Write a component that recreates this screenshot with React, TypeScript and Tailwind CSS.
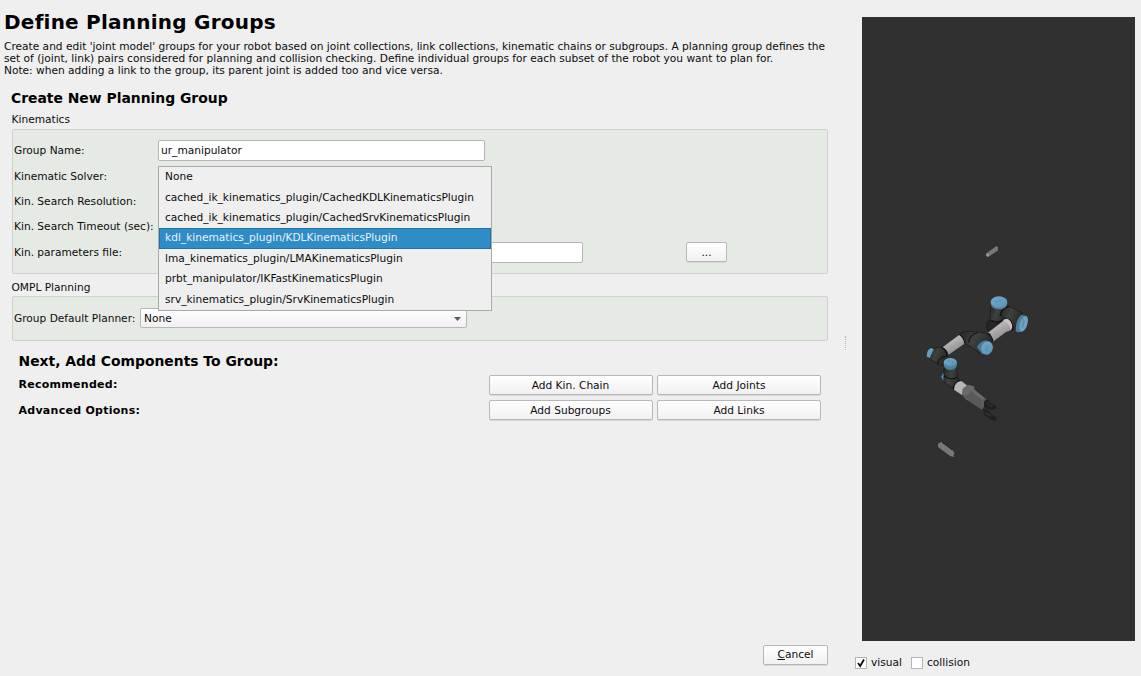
import type { ReactNode } from "react";

const solvers = [
  "None",
  "cached_ik_kinematics_plugin/CachedKDLKinematicsPlugin",
  "cached_ik_kinematics_plugin/CachedSrvKinematicsPlugin",
  "kdl_kinematics_plugin/KDLKinematicsPlugin",
  "lma_kinematics_plugin/LMAKinematicsPlugin",
  "prbt_manipulator/IKFastKinematicsPlugin",
  "srv_kinematics_plugin/SrvKinematicsPlugin",
];

function Button({ className, children }: { className: string; children: ReactNode }) {
  return (
    <button
      className={`flex h-[20px] items-center justify-center rounded-[2px] border border-[#b8b6b8] bg-linear-to-b from-white to-[#f2f0f2] pt-px shadow-[0_1px_0_#d8d8d8] ${className}`}
    >
      {children}
    </button>
  );
}

function SolverMenu() {
  return (
    <ul className="absolute top-[-10px] left-0 z-10 h-[145px] w-[334px] border border-[#a9a9a9] bg-[#efefef] pt-[0.5px] text-[#0c0c0c]">
      {solvers.map((s, i) => (
        <li
          key={s}
          className={`flex h-[20.4px] items-center pl-1.5 whitespace-nowrap ${
            i === 3 ? "bg-[#308cc6] text-[#e6f3fb] outline-1 -outline-offset-1 outline-[#2274a8]" : ""
          }`}
        >
          {s}
        </li>
      ))}
    </ul>
  );
}

function Row({ label, children }: { label: string; children?: ReactNode }) {
  return (
    <div className="flex h-[25.4px] items-center">
      <div className="w-[144px] shrink-0 pt-px whitespace-nowrap">{label}</div>
      {children}
    </div>
  );
}

function RobotView() {
  return (
    <svg viewBox="862 17 273 624" className="h-[624px] w-[273px] bg-[#303030]">
      <defs>
        <linearGradient id="tube" x1="0" y1="0" x2="0.6" y2="1">
          <stop offset="0" stopColor="#8f8d8d" />
          <stop offset="0.4" stopColor="#b9b6b6" />
          <stop offset="1" stopColor="#858383" />
        </linearGradient>
        <linearGradient id="joint" x1="0" y1="0" x2="1" y2="0.4">
          <stop offset="0" stopColor="#222422" />
          <stop offset="0.5" stopColor="#3e413e" />
          <stop offset="1" stopColor="#272927" />
        </linearGradient>
        <linearGradient id="cap" x1="0" y1="0" x2="1" y2="1">
          <stop offset="0" stopColor="#73a9cb" />
          <stop offset="1" stopColor="#5c92b4" />
        </linearGradient>
      </defs>
      <g transform="translate(910 280) scale(.33333)">
        <path d="M231 125 L240 120 L268 130 L264 152 L236 160 L230 143Z" fill="#252625" stroke="#141514" strokeWidth="2" />
        <path d="M242 70 L292 72 L288 98 L276 124 L256 128 L240 120Z" fill="url(#joint)" stroke="#181918" strokeWidth="2" />
        <path d="M270 106 Q274 78 300 80 L336 98 L324 150 L304 146 L292 118Z" fill="url(#joint)" stroke="#181918" strokeWidth="2" />
        <path d="M270 108 Q276 84 297 80 M244 121 Q262 132 276 120" fill="none" stroke="#090909" strokeWidth="3" />
        <ellipse cx="267" cy="71" rx="25" ry="17" fill="#4d7f9f" />
        <ellipse cx="267" cy="66" rx="25" ry="17" fill="url(#cap)" />
        <path d="M317 153 Q316 122 333 105 Q350 103 352 121 Q354 143 339 154 Q326 160 317 153Z" fill="#4c7e9e" />
        <ellipse cx="341" cy="131" rx="11" ry="24" transform="rotate(18 341 131)" fill="#6ea3c4" />
        <path d="M339 115 V142 M346 122 L336 137" stroke="#4f829f" strokeWidth="2" />
        <path d="M232 160 L282 121 Q294 112 303 125 Q312 138 302 151 L288 156 L249 185Z" fill="url(#tube)" />
        <path d="M279 121 Q292 111 303 125 Q312 139 301 151 Q303 134 279 121Z" fill="#c9c5c5" />
        <path d="M296 116 Q313 132 307 151" fill="none" stroke="#0b0b0b" strokeWidth="3" />
        <path d="M148 163 Q157 153 174 154 L205 156 L240 161 L248 183 L207 219 L184 200 L163 190Z" fill="url(#joint)" stroke="#161716" strokeWidth="2" />
        <path d="M176 188 Q177 164 203 158 M231 160 Q248 169 249 185 M148 163 Q162 171 165 190" fill="none" stroke="#090909" strokeWidth="3" />
        <path d="M201 202 Q209 184 227 181 L241 186 L248 200 Q247 217 234 224 L216 221Z" fill="#487997" />
        <ellipse cx="231" cy="204" rx="17" ry="20" transform="rotate(23 231 204)" fill="url(#cap)" />
        <path d="M229 193 V214 M237 196 L229 209" stroke="#4f83a1" strokeWidth="1.5" />
        <path d="M98 202 L147 165 Q160 173 163 191 L116 224 Q111 207 98 202Z" fill="url(#tube)" />
        <path d="M66 207 L88 202 Q105 203 112 227 L104 257 L89 255 L52 231Z" fill="url(#joint)" stroke="#161716" strokeWidth="2" />
        <path d="M94 202 Q110 210 112 230 M83 253 Q84 233 105 229" fill="none" stroke="#090909" strokeWidth="3" />
        <path d="M50 230 Q50 208 64 204 L71 208 L59 234Z" fill="#659dbf" />
        <path d="M99 280 L94 290 L100 304 L107 306 L104 283Z" fill="#5790b1" />
        <path d="M103 254 L140 258 L143 294 L151 304 L134 329 L101 306Z" fill="url(#joint)" stroke="#161716" strokeWidth="2" />
        <path d="M102 287 Q121 303 143 292 M130 327 Q132 306 151 302" fill="none" stroke="#080808" strokeWidth="3" />
        <ellipse cx="121" cy="254" rx="20" ry="16" fill="#4b7d9c" />
        <ellipse cx="121" cy="248" rx="20" ry="14" fill="url(#cap)" />
        <path d="M104 253 Q121 265 139 254" fill="none" stroke="#3f6e8a" strokeWidth="2" />
        <path d="M132 329 Q133 305 154 303 L172 317 L157 346Z" fill="#b8b6b6" />
        <path d="M156 344 L158 326 L174 314 L192 319 L195 328 L228 355 L229 366 L216 389 L176 363 L166 358Z" fill="#5e5e5e" />
        <path d="M174 314 L191 320 L193 330 L228 355 L217 360 L184 342 L171 350 L157 341 L160 326Z" fill="#6a6a6a" />
        <path d="M167 350 L184 334 L213 358 L214 387Z" fill="#595959" />
        <path d="M193 326 L228 355" stroke="#262626" strokeWidth="3" />
        <path d="M222 366 L227 359 L236 360 L240 369 L258 377 L259 386 L247 390 L232 387 L222 380Z" fill="#1e211e" />
        <path d="M219 388 L232 389 L241 400 L259 413 L257 423 L244 419 L222 404Z" fill="#1e211e" />
        <path d="M229 368 L241 378 L247 378 M226 399 L244 408" fill="none" stroke="#3c3f3c" strokeWidth="3" />
        <path d="M255 65 h6 m5 -3 h6 M115 243 h5 m5 5 h5" stroke="#497b99" strokeWidth="2" />
      </g>
      <path d="M986 253.5 L996.5 246 L998 247 L998 250.5 L988 257 L986 255Z" fill="#777" />
      <path d="M986 254 L989 254 L989 256 L987 257Z" fill="#999" />
      <path d="M938 444 L941 442 L955 452 L954 457 L950 456 L938 447Z" fill="#777" />
      <path d="M943 443 L955 452 L954 456" fill="none" stroke="#191919" strokeDasharray="1.5 1" />
    </svg>
  );
}

export default function App() {
  return (
    <div className="flex h-[676px] w-[1141px] overflow-hidden bg-[#efefef] font-['DejaVu_Sans',sans-serif] text-[10.62px] leading-[12.2px] text-[#0c0c0c]">
      <main className="flex w-[828px] shrink-0 flex-col">
        <h1 className="mt-[10px] ml-1 h-[24px] text-[20px] leading-[25px] font-bold tracking-[0.23px] text-black">Define Planning Groups</h1>
        <p className="mt-[6.5px] ml-1 whitespace-nowrap">
          Create and edit 'joint model' groups for your robot based on joint collections, link collections, kinematic chains or subgroups. A planning group defines the
          <br />
          set of (joint, link) pairs considered for planning and collision checking. Define individual groups for each subset of the robot you want to plan for.
          <br />
          Note: when adding a link to the group, its parent joint is added too and vice versa.
        </p>
        <h2 className="mt-[13px] ml-[11px] h-[16px] text-[13.9px] leading-[16px] font-bold text-black">Create New Planning Group</h2>
        <div className="mt-[7px] ml-[11.5px] h-[16px] leading-[14px]">Kinematics</div>

        <section className="ml-[12px] h-[145px] rounded-[2px] border border-[#cfd1cf] bg-[#e5eae4] pt-[8px] pl-px">
          <Row label="Group Name:">
            <input className="h-[21px] w-[327px] rounded-[2px] border border-[#b5b5b5] bg-white px-[2px]" defaultValue="ur_manipulator" />
          </Row>
          <Row label="Kinematic Solver:">
            <div className="relative h-[1px] w-[334px]">
              <SolverMenu />
            </div>
          </Row>
          <Row label="Kin. Search Resolution:" />
          <Row label="Kin. Search Timeout (sec):" />
          <Row label="Kin. parameters file:">
            <input className="h-[21px] w-[425px] rounded-[2px] border border-[#b5b5b5] bg-white" />
            <Button className="ml-[103px] w-[41px]">...</Button>
          </Row>
        </section>

        <div className="mt-[6px] ml-[11.5px] h-[16px] pt-px leading-[14px]">OMPL Planning</div>
        <section className="ml-[12px] flex h-[45px] items-center rounded-[2px] border border-[#cfd1cf] bg-[#e5eae4] pb-px pl-px">
          <div className="w-[126px] pt-px">Group Default Planner:</div>
          <button className="flex h-[20px] w-[327px] items-center justify-between rounded-[2px] border border-[#b8b6b8] bg-linear-to-b from-white to-[#f2f0f2] pt-px pr-[5px] pl-[3px]">
            None
            <svg viewBox="0 0 7 4" className="h-1 w-[7px]">
              <path d="M0 0H7L3.5 4Z" fill="#5b5b5b" />
            </svg>
          </button>
        </section>

        <h2 className="mt-[11px] ml-[18.5px] h-[18px] text-[13.9px] leading-[18px] font-bold text-black">Next, Add Components To Group:</h2>
        <div className="mt-[5px] mr-[7px] ml-[18.5px] flex flex-col gap-[5px]">
          <div className="flex h-[20px] items-center gap-[4.5px]">
            <h3 className="grow text-[11px] font-bold tracking-[0.27px] text-black">Recommended:</h3>
            <Button className="w-[164px]">Add Kin. Chain</Button>
            <Button className="w-[164px]">Add Joints</Button>
          </div>
          <div className="flex h-[20px] items-center gap-[4.5px]">
            <h3 className="grow pt-px text-[11px] font-bold tracking-[0.27px] text-black">Advanced Options:</h3>
            <Button className="w-[164px]">Add Subgroups</Button>
            <Button className="w-[164px]">Add Links</Button>
          </div>
        </div>
        <Button className="mt-auto mb-[11px] w-[65px] self-end">
          <span>
            <span className="underline">C</span>ancel
          </span>
        </Button>
      </main>

      <div className="flex w-[27px] shrink-0 justify-end pt-[336px] pr-[9px]">
        <div className="h-[14px] w-0 border-l border-dotted border-[#b5b5b5]" />
      </div>

      <aside className="flex w-[286px] flex-col pt-[17px]">
        <div className="pl-[7px]">
          <RobotView />
        </div>
        <div className="mt-[16px] flex h-[12px] items-center">
          <span className="flex size-[12px] items-center justify-center border border-[#b5b5b5] bg-white">
            <svg viewBox="0 0 10 10" className="size-[10px]">
              <path d="M2 5L4.2 8L8 1.5" fill="none" stroke="#111" strokeWidth="1.8" />
            </svg>
          </span>
          <span className="ml-[4px] w-[40px] pt-px">visual</span>
          <span className="size-[12px] border border-[#b5b5b5] bg-white" />
          <span className="ml-[4px] pt-px">collision</span>
        </div>
      </aside>
    </div>
  );
}
